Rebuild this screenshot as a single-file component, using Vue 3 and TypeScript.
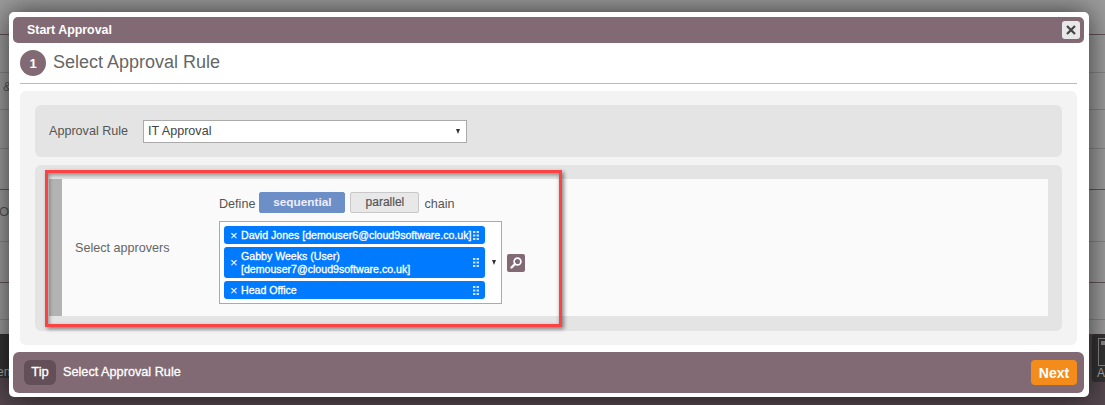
<script setup lang="ts">
interface Approver {
  id: number
  lines: string[]
}

const approvers: Approver[] = [
  { id: 1, lines: ['David Jones [demouser6@cloud9software.co.uk]'] },
  { id: 2, lines: ['Gabby Weeks (User)', '[demouser7@cloud9software.co.uk]'] },
  { id: 3, lines: ['Head Office'] },
]
</script>

<template>
  <div class="page">
    <div class="backdrop">
      <div class="bg-line dark" style="top: 34px"></div>
      <div class="bg-line" style="top: 72px"></div>
      <div class="bg-line" style="top: 109px"></div>
      <div class="bg-line" style="top: 148px"></div>
      <div class="bg-line dark" style="top: 189px"></div>
      <div class="bg-line" style="top: 241px"></div>
      <div class="bg-line dark" style="top: 282px"></div>
      <div class="bg-line" style="top: 319px"></div>
      <span class="bg-amp">&amp;</span>
      <span class="bg-de">Or</span>
      <div class="bg-foot"></div>
      <div class="dock dock-left"><span>en</span></div>
      <div class="dock dock-right"><i></i><span>Ar</span></div>
    </div>

    <div class="modal">
      <header class="title-bar">
        <span class="title">Start Approval</span>
        <button class="close" type="button" aria-label="Close">
          <svg width="10" height="10" viewBox="0 0 10 10">
            <path d="M1 1 L9 9 M9 1 L1 9" stroke="#444" stroke-width="2.2" fill="none" />
          </svg>
        </button>
      </header>

      <div class="step">
        <span class="step-num">1</span>
        <h2>Select Approval Rule</h2>
      </div>

      <div class="panel">
        <div class="rule-row">
          <label>Approval Rule</label>
          <div class="select">
            <span>IT Approval</span>
            <i class="caret"></i>
          </div>
        </div>

        <div class="approver-wrap">
          <div class="approver-row">
            <div class="side-bar"></div>
            <div class="approver-label">Select approvers</div>
            <div class="approver-main">
              <div class="define">
                <span class="define-text">Define</span>
                <span class="toggle on">sequential</span>
                <span class="toggle">parallel</span>
                <span class="define-text">chain</span>
              </div>
              <div class="picker">
                <div class="multi">
                  <div class="chips">
                    <div v-for="a in approvers" :key="a.id" class="chip">
                      <span class="chip-x">×</span>
                      <span class="chip-text">
                        <span v-for="l in a.lines" :key="l">{{ l }}</span>
                      </span>
                      <svg class="grip" width="6" height="9" viewBox="0 0 6 9">
                        <g fill="#fff" opacity="0.8">
                          <rect x="0" y="0" width="2.4" height="2" />
                          <rect x="3.6" y="0" width="2.4" height="2" />
                          <rect x="0" y="3.5" width="2.4" height="2" />
                          <rect x="3.6" y="3.5" width="2.4" height="2" />
                          <rect x="0" y="7" width="2.4" height="2" />
                          <rect x="3.6" y="7" width="2.4" height="2" />
                        </g>
                      </svg>
                    </div>
                  </div>
                  <i class="caret"></i>
                </div>
                <button class="search" type="button" aria-label="Search">
                  <svg width="14" height="14" viewBox="0 0 14 14">
                    <circle cx="8.5" cy="5.5" r="3.4" fill="none" stroke="#fff" stroke-width="1.7" />
                    <path d="M6 8 L2.5 11.5" stroke="#fff" stroke-width="2.4" stroke-linecap="round" />
                  </svg>
                </button>
              </div>
            </div>
          </div>
          <div class="highlight"></div>
        </div>
      </div>

      <footer class="foot">
        <span class="tip">Tip</span>
        <span class="tip-text">Select Approval Rule</span>
        <button class="next" type="button">Next</button>
      </footer>
    </div>
  </div>
</template>

<style>
html,
body {
  margin: 0;
  background: #999;
}
</style>

<style scoped>
.page {
  position: relative;
  width: 1105px;
  height: 405px;
  overflow: hidden;
  font-family: 'Liberation Sans', Arial, sans-serif;
  box-sizing: border-box;
  padding: 12px 16px 8px 9px;
}

.backdrop {
  position: absolute;
  inset: 0;
  background: #9c9c9c;
}

.bg-line {
  position: absolute;
  left: 0;
  right: 0;
  height: 1px;
  background: #858585;
}

.bg-line.dark {
  background: #62525a;
}

.bg-amp,
.bg-de {
  position: absolute;
  left: 3px;
  top: 79px;
  font-size: 13px;
  color: #555;
}

.bg-de {
  left: -1px;
  top: 204px;
}

.bg-foot {
  position: absolute;
  left: 0;
  right: 0;
  top: 334px;
  bottom: 0;
  background: #54474d;
}

.dock {
  position: absolute;
  top: 334px;
  width: 30px;
  height: 44px;
  background: #333;
  color: #aaa;
  font-size: 12px;
}

.dock-left {
  left: 0;
}

.dock-left span {
  position: absolute;
  left: -3px;
  top: 31px;
}

.dock-right {
  left: 1092px;
  height: 48px;
  border-radius: 3px 0 0 3px;
}

.dock-right i {
  position: absolute;
  left: 6px;
  top: 4px;
  width: 14px;
  height: 26px;
  border: 1px solid #888;
}

.dock-right i::after {
  content: '';
  position: absolute;
  left: 2px;
  top: 2px;
  right: 0;
  height: 4px;
  background: #888;
}

.dock-right span {
  position: absolute;
  left: 5px;
  top: 32px;
}

.modal {
  position: relative;
  width: 1080px;
  height: 385px;
  box-sizing: border-box;
  padding: 5px 5px 4px 4px;
  background: #fff;
  border-radius: 5px;
  box-shadow: 0 0 28px rgba(0, 0, 0, 0.65);
  display: flex;
  flex-direction: column;
}

.title-bar {
  height: 26px;
  flex: none;
  display: flex;
  align-items: center;
  justify-content: space-between;
  padding: 0 4px 0 14px;
  background: #826a74;
  border-radius: 5px;
}

.title {
  color: #fff;
  font-size: 12.4px;
  font-weight: 700;
}

.close {
  width: 18px;
  height: 18px;
  padding: 0;
  border: none;
  border-radius: 3px;
  background: #e8e8e8;
  display: flex;
  align-items: center;
  justify-content: center;
}

.step {
  display: flex;
  align-items: flex-start;
  gap: 7px;
  height: 41px;
  margin: 0 7px;
  padding-top: 7px;
  box-sizing: border-box;
  border-bottom: 1px solid #bbb;
  flex: none;
}

.step-num {
  width: 26px;
  height: 26px;
  border-radius: 50%;
  background: #826a74;
  color: #fff;
  font-size: 13px;
  font-weight: 700;
  display: flex;
  align-items: center;
  justify-content: center;
}

.step h2 {
  margin: -1px 0 0;
  font-size: 18px;
  line-height: 26px;
  font-weight: 400;
  color: #666;
}

.panel {
  flex: none;
  height: 254px;
  margin: 7px 7px 0;
  padding: 14px 15px;
  box-sizing: border-box;
  background: #f3f3f3;
  border-radius: 6px;
  display: flex;
  flex-direction: column;
  gap: 8px;
}

.rule-row {
  height: 52px;
  flex: none;
  display: flex;
  align-items: center;
  padding-left: 14px;
  background: #e4e4e4;
  border-radius: 6px;
}

.rule-row label {
  width: 94px;
  padding-bottom: 1px;
  font-size: 12.6px;
  color: #555;
}

.select {
  width: 324px;
  height: 23px;
  box-sizing: border-box;
  padding: 0 6px 0 4px;
  border: 1px solid #aaa;
  background: #fff;
  display: flex;
  align-items: center;
  justify-content: space-between;
  font-size: 12.6px;
  color: #444;
}

.select span {
  padding-bottom: 1px;
}

.caret {
  width: 0;
  height: 0;
  border-left: 2.5px solid transparent;
  border-right: 2.5px solid transparent;
  border-top: 5px solid #333;
  flex: none;
}

.approver-wrap {
  position: relative;
  flex: 1;
  min-height: 0;
  padding: 14px 14px 15px;
  background: #e4e4e4;
  border-radius: 6px;
}

.approver-row {
  height: 137px;
  display: flex;
  background: #fafafa;
}

.side-bar {
  width: 13px;
  flex: none;
  background: #b3b3b3;
}

.approver-label {
  width: 157px;
  flex: none;
  padding-left: 13px;
  align-self: center;
  box-sizing: border-box;
  font-size: 12.6px;
  color: #666;
}

.approver-main {
  display: flex;
  flex-direction: column;
  padding-top: 13px;
  gap: 8px;
}

.define {
  display: flex;
  align-items: center;
  gap: 4px;
  font-size: 12.6px;
  color: #555;
}

.define-text {
  padding-top: 3px;
}

.toggle {
  height: 21px;
  box-sizing: border-box;
  padding: 0 0 2px;
  border-radius: 2px;
  border: 1px solid #c8c8c8;
  background: #e8e8e8;
  display: flex;
  align-items: center;
  justify-content: center;
  width: 69px;
  font-size: 12px;
  color: #555;
  -webkit-text-stroke: 0.2px #555;
  margin-right: 1px;
}

.toggle.on {
  width: 86px;
  background: #6d8fc7;
  border-color: #6d8fc7;
  color: #eef;
  font-size: 11.8px;
  font-weight: 700;
  -webkit-text-stroke: 0;
}

.picker {
  display: flex;
  align-items: center;
  gap: 5px;
}

.multi {
  width: 283px;
  height: 83px;
  box-sizing: border-box;
  padding-left: 4px;
  border: 1px solid #aaa;
  background: #fff;
  display: flex;
  align-items: center;
}

.multi .caret {
  margin-left: 7px;
}

.chips {
  width: 261px;
  margin-top: 4px;
  display: flex;
  flex-direction: column;
  gap: 3px;
  align-self: flex-start;
}

.chip {
  display: flex;
  align-items: center;
  padding: 0 3px 0 6px;
  box-sizing: border-box;
  background: #007bff;
  border-radius: 3px;
  color: #fff;
  font-size: 10.6px;
  line-height: 13px;
  -webkit-text-stroke: 0.3px #fff;
  position: relative;
}

.chip-x {
  width: 11px;
  flex: none;
  font-size: 13px;
  -webkit-text-stroke: 0;
}

.chip-text {
  display: flex;
  flex-direction: column;
  padding: 2.5px 0;
  white-space: nowrap;
}

.grip {
  position: absolute;
  right: 6px;
  top: 50%;
  margin-top: -4.5px;
}

.search {
  width: 18px;
  height: 18px;
  padding: 0;
  border: none;
  border-radius: 2px;
  background: #826a74;
  display: flex;
  align-items: center;
  justify-content: center;
}

.highlight {
  position: absolute;
  left: 10px;
  top: 5px;
  width: 517px;
  height: 157px;
  box-sizing: border-box;
  border: 3px solid #fa4444;
  box-shadow: 2px 2px 4px rgba(0, 0, 0, 0.45), inset 1px 2px 4px rgba(0, 0, 0, 0.4);
  pointer-events: none;
}

.foot {
  flex: none;
  height: 41px;
  margin-top: auto;
  padding: 0 7px 0 11px;
  display: flex;
  align-items: center;
  background: #826a74;
  border-radius: 6px;
  color: #fff;
}

.tip {
  width: 32px;
  height: 25px;
  padding-bottom: 2px;
  box-sizing: border-box;
  border-radius: 6px;
  background: #634f58;
  display: flex;
  align-items: center;
  justify-content: center;
  font-size: 13px;
  -webkit-text-stroke: 0.3px #fff;
}

.tip-text {
  margin-left: 7px;
  padding-bottom: 2px;
  font-size: 12.7px;
  -webkit-text-stroke: 0.3px #fff;
}

.next {
  margin-left: auto;
  width: 46px;
  height: 25px;
  padding: 0;
  border: none;
  border-radius: 4px;
  background: #f48c1c;
  color: #fff;
  font-family: inherit;
  font-size: 14px;
  font-weight: 700;
}
</style>
